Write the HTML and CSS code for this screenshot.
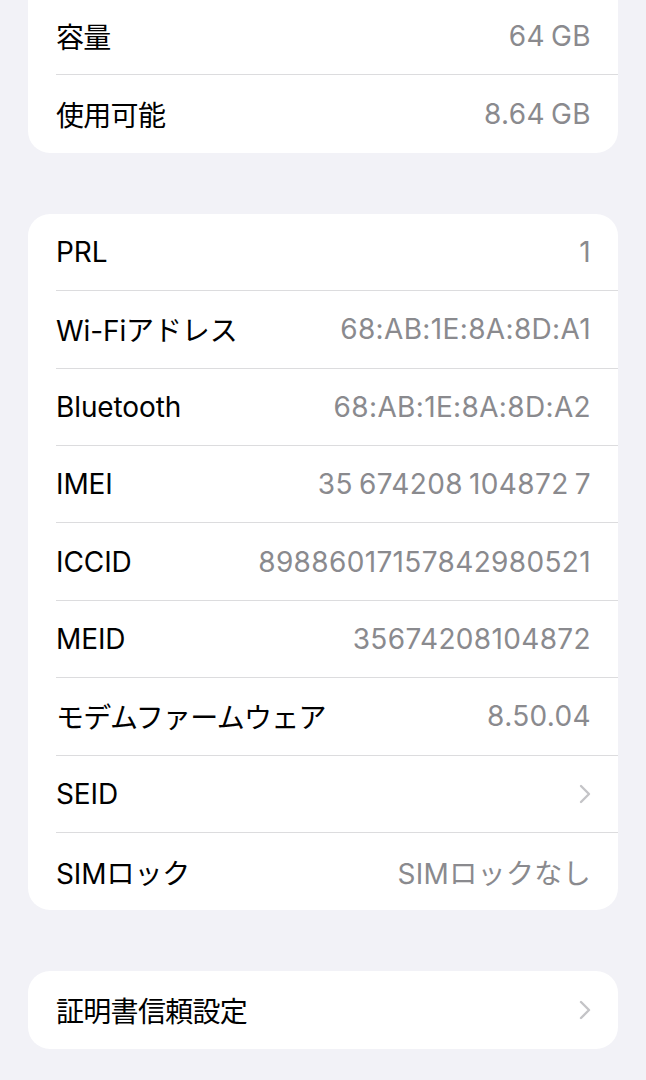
FILE: index.html
```html
<!DOCTYPE html>
<html lang="ja">
<head>
    <meta charset="UTF-8">
    <meta name="viewport" content="width=device-width, initial-scale=1.0">
    <link rel="stylesheet" href="styles.css">
    <title>情報</title>
</head>
<body>
    <div class="page">

        <div class="card card-top">
            <div class="row">
                <span class="label jp">容量</span>
                <span class="value">64 GB</span>
            </div>
            <div class="row">
                <span class="label jp">使用可能</span>
                <span class="value">8.64 GB</span>
            </div>
        </div>

        <div class="card">
            <div class="row">
                <span class="label">PRL</span>
                <span class="value">1</span>
            </div>
            <div class="row">
                <span class="label">Wi-Fiアドレス</span>
                <span class="value">68:AB:1E:8A:8D:A1</span>
            </div>
            <div class="row">
                <span class="label">Bluetooth</span>
                <span class="value">68:AB:1E:8A:8D:A2</span>
            </div>
            <div class="row">
                <span class="label">IMEI</span>
                <span class="value">35 674208 104872 7</span>
            </div>
            <div class="row">
                <span class="label">ICCID</span>
                <span class="value">89886017157842980521</span>
            </div>
            <div class="row">
                <span class="label">MEID</span>
                <span class="value">35674208104872</span>
            </div>
            <div class="row">
                <span class="label jp">モデムファームウェア</span>
                <span class="value">8.50.04</span>
            </div>
            <div class="row">
                <span class="label">SEID</span>
                <svg class="chevron" viewBox="0 0 12 20" width="12" height="20">
                    <path d="M2 2 L10 10 L2 18" />
                </svg>
            </div>
            <div class="row">
                <span class="label">SIMロック</span>
                <span class="value">SIMロックなし</span>
            </div>
        </div>

        <div class="card">
            <div class="row">
                <span class="label jp">証明書信頼設定</span>
                <svg class="chevron" viewBox="0 0 12 20" width="12" height="20">
                    <path d="M2 2 L10 10 L2 18" />
                </svg>
            </div>
        </div>

    </div>
</body>
</html>
```

FILE: styles.css
```css
body {
    margin: 0;
    background-color: #f2f2f7;
    font-family: Inter, "Noto Sans CJK JP", sans-serif;
    font-size: 28px;
    color: #000;
}

.page {
    margin-top: -2px;
    padding: 0 28px 0 28px;
    display: flex;
    flex-direction: column;
    gap: 61px;
}

.card {
    background-color: #fff;
    border-radius: 22px;
    padding-left: 28px;
}

.card-top {
    border-top-left-radius: 0;
    border-top-right-radius: 0;
}

.row {
    height: 77.4px;
    display: flex;
    align-items: center;
    justify-content: space-between;
    padding-right: 27px;
    border-bottom: 1px solid #dcdcde;
    box-sizing: border-box;
}

.row:last-child {
    border-bottom: none;
}

.label {
    letter-spacing: -0.1px;
}

/* cisto japonske popisky su v originale o kus uzsie */
.label.jp {
    letter-spacing: -0.7px;
}

.value {
    color: #8a8a8e;
    letter-spacing: 0.35px;
    word-spacing: -2px;
}

.chevron {
    fill: none;
    stroke: #c4c4c7;
    stroke-width: 2.4;
    stroke-linecap: round;
    stroke-linejoin: round;
}
```
